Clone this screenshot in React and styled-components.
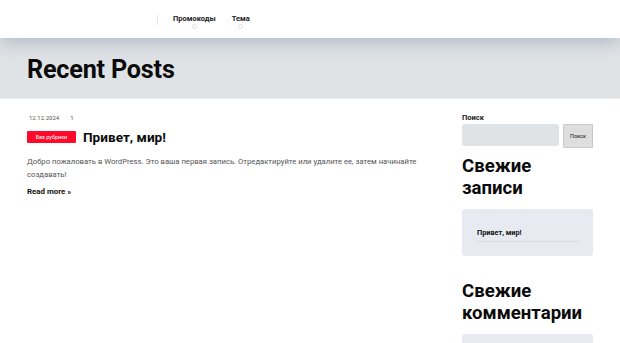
import React from "react";
import styled, { createGlobalStyle } from "styled-components";

const GlobalStyle = createGlobalStyle`
  body {
    margin: 0;
    font-family: Roboto, "Liberation Sans", sans-serif;
    background: #fff;
    color: #111;
  }
`;

const App = () => {
  return (
    <Page>
      <GlobalStyle />
      <Header>
        <Brand />
        <Divider />
        <Nav>
          <NavItem>Промокоды</NavItem>
          <NavItem>Тема</NavItem>
        </Nav>
      </Header>
      <Hero>
        <HeroTitle>Recent Posts</HeroTitle>
      </Hero>
      <Body>
        <Main>
          <Meta>
            <span>12.12.2024</span>
            <span>1</span>
          </Meta>
          <TitleRow>
            <Badge>Без рубрики</Badge>
            <PostTitle>Привет, мир!</PostTitle>
          </TitleRow>
          <Excerpt>
            Добро пожаловать в WordPress. Это ваша первая запись. Отредактируйте
            или удалите ее, затем начинайте создавать!
          </Excerpt>
          <ReadMore>Read more »</ReadMore>
        </Main>
        <Sidebar>
          <SearchLabel>Поиск</SearchLabel>
          <SearchRow>
            <SearchInput />
            <SearchButton>Поиск</SearchButton>
          </SearchRow>
          <WidgetTitle>Свежие записи</WidgetTitle>
          <WidgetCard>
            <CardLink>Привет, мир!</CardLink>
          </WidgetCard>
          <WidgetTitle $spaced>Свежие комментарии</WidgetTitle>
          <WidgetCard />
        </Sidebar>
      </Body>
    </Page>
  );
};

export default App;

const Page = styled.div`
  width: 620px;
  height: 343px;
  overflow: hidden;
`;

const Header = styled.header`
  position: relative;
  z-index: 2;
  height: 38px;
  display: flex;
  align-items: center;
  padding: 0 27px;
  background: #fff;
  box-shadow: 0 3px 20px rgba(60, 90, 125, 0.34);
`;

const Brand = styled.div`
  width: 130px;
`;

const Divider = styled.div`
  width: 1px;
  height: 10px;
  background: #e8e8e8;
  margin-top: 1px;
`;

const Nav = styled.nav`
  display: flex;
  gap: 16px;
  margin-left: 15px;
`;

const NavItem = styled.div`
  display: flex;
  flex-direction: column;
  align-items: center;
  font-size: 7.5px;
  font-weight: 700;
  color: #222;
  padding-top: 5px;

  &::after {
    content: "";
    width: 3px;
    height: 3px;
    border-radius: 50%;
    border: 1px solid #e2e2e2;
    margin-top: 1px;
  }
`;

const Hero = styled.section`
  height: 60px;
  background: #e0e3e6;
  border-bottom: 1px solid #eceef0;
  display: flex;
  align-items: center;
  padding: 0 27px;
`;

const HeroTitle = styled.h1`
  margin: 3px 0 0;
  font-size: 25.2px;
  font-weight: 700;
  color: #0b0b0b;
  letter-spacing: -0.2px;
`;

const Body = styled.div`
  display: flex;
  gap: 27px;
  padding: 12px 27px 0;
`;

const Main = styled.main`
  width: 408px;
`;

const Meta = styled.div`
  display: flex;
  gap: 11px;
  font-size: 6px;
  color: #555;
  padding-left: 2px;
  height: 12px;
  align-items: center;
`;

const TitleRow = styled.div`
  display: flex;
  align-items: center;
  gap: 7px;
  margin-top: 6px;
`;

const Badge = styled.span`
  width: 49px;
  height: 12px;
  background: #ff0a2b;
  border-radius: 1px;
  color: #fff;
  font-size: 5.5px;
  display: flex;
  align-items: center;
  justify-content: center;
`;

const PostTitle = styled.h2`
  margin: 0;
  font-size: 13.6px;
  font-weight: 700;
  color: #0b0b0b;
`;

const Excerpt = styled.p`
  margin: 10px 0 0;
  font-size: 7.7px;
  line-height: 13px;
  color: #555;
`;

const ReadMore = styled.div`
  margin-top: 6px;
  font-size: 7.9px;
  font-weight: 700;
  color: #111;
`;

const Sidebar = styled.aside`
  width: 131px;
  display: flex;
  flex-direction: column;
`;

const SearchLabel = styled.div`
  font-size: 7.5px;
  font-weight: 700;
  color: #222;
  height: 13px;
  line-height: 13px;
`;

const SearchRow = styled.div`
  display: flex;
  gap: 4px;
`;

const SearchInput = styled.div`
  flex: 1;
  height: 22px;
  background: #e0e3e6;
  border-radius: 3px;
`;

const SearchButton = styled.div`
  width: 28px;
  height: 22px;
  background: #dedede;
  border: 1px solid #c9c9c9;
  border-radius: 1px;
  font-size: 5.5px;
  color: #111;
  display: flex;
  align-items: center;
  justify-content: center;
`;

const WidgetTitle = styled.h3`
  margin: ${(p) => (p.$spaced ? "24px" : "7px")} 0 0;
  font-size: 18.6px;
  line-height: 22px;
  font-weight: 700;
  color: #0b0b0b;
`;

const WidgetCard = styled.div`
  margin-top: 10px;
  min-height: 47px;
  background: #e8eaf2;
  border-radius: 3px;
  padding: 19px 14px 0 15px;
  box-sizing: border-box;
`;

const CardLink = styled.div`
  font-size: 7.3px;
  font-weight: 700;
  color: #111;
  padding-bottom: 4px;
  border-bottom: 1px solid #d8dae3;
`;
